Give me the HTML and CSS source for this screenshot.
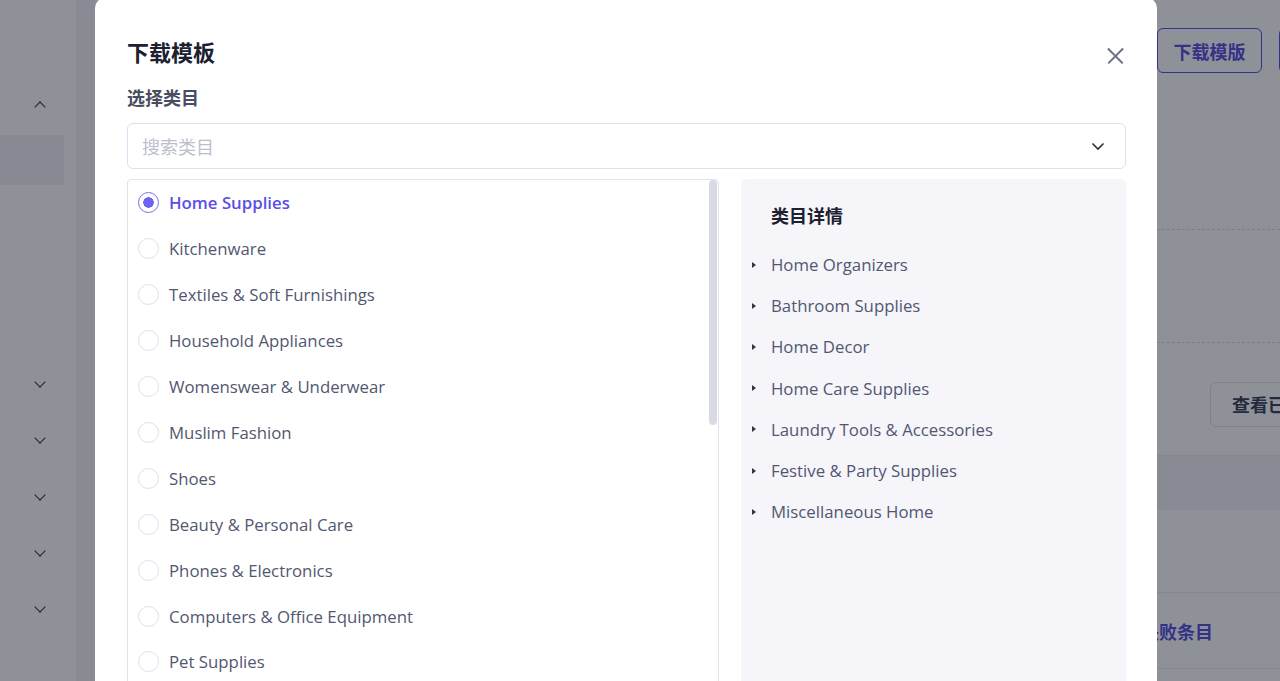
FILE: index.html
```html
<!DOCTYPE html>
<html lang="zh-CN">
<head>
  <meta charset="UTF-8" />
  <title>下载模板</title>
  <link rel="stylesheet" href="styles.css">
</head>
<body>
  <!-- strona pod spodem -->
  <div class="page">
    <aside class="sidebar">
      <div class="side-item"><span class="chev up"></span></div>
      <div class="side-active"></div>
      <div class="side-spacer"></div>
      <div class="side-item"><span class="chev"></span></div>
      <div class="side-item"><span class="chev"></span></div>
      <div class="side-item"><span class="chev"></span></div>
      <div class="side-item"><span class="chev"></span></div>
      <div class="side-item"><span class="chev"></span></div>
    </aside>
    <main class="main">
      <div class="header">
        <button class="btn-outline">下载模版</button>
        <button class="btn-fill"></button>
      </div>
      <div class="row row-a dashed"></div>
      <div class="row row-b dashed"></div>
      <div class="row row-c"><button class="btn-gray">查看已</button></div>
      <div class="row row-band"></div>
      <div class="row row-d"></div>
      <div class="row row-e"><span class="link">查看失败条目</span></div>
      <div class="row row-f"></div>
    </main>
  </div>
  <div class="mask"></div>

  <!-- okno modalne -->
  <div class="modal">
    <div class="modal-head">
      <h2>下载模板</h2>
      <span class="close"></span>
    </div>
    <div class="label">选择类目</div>
    <div class="select">
      <span class="placeholder">搜索类目</span>
      <svg width="14" height="9" viewBox="0 0 14 9"><path d="M1.5 1.5 L7 7 L12.5 1.5" fill="none" stroke="#2b2f3a" stroke-width="1.6"/></svg>
    </div>
    <div class="body">
      <div class="list">
        <div class="scroll"></div>
        <div id="cats"></div>
      </div>
      <div class="detail">
        <h3>类目详情</h3>
        <div id="subs"></div>
      </div>
    </div>
  </div>

  <script>
    const cats = ["Home Supplies", "Kitchenware", "Textiles & Soft Furnishings", "Household Appliances",
      "Womenswear & Underwear", "Muslim Fashion", "Shoes", "Beauty & Personal Care",
      "Phones & Electronics", "Computers & Office Equipment", "Pet Supplies"];
    const subs = ["Home Organizers", "Bathroom Supplies", "Home Decor", "Home Care Supplies",
      "Laundry Tools & Accessories", "Festive & Party Supplies", "Miscellaneous Home"];

    const catsEl = document.getElementById("cats");
    cats.forEach((c, i) => {
      const row = document.createElement("div");
      row.className = "cat" + (i === 0 ? " active" : "");
      row.innerHTML = `<span class="radio"></span><span>${c.replace("&", "&amp;")}</span>`;
      catsEl.appendChild(row);
    });

    const subsEl = document.getElementById("subs");
    subs.forEach(s => {
      const row = document.createElement("div");
      row.className = "sub";
      row.innerHTML = `<span class="tri"></span><span>${s.replace("&", "&amp;")}</span>`;
      subsEl.appendChild(row);
    });
  </script>
</body>
</html>
```

FILE: styles.css
```css
* { box-sizing: border-box; }
html, body { margin: 0; height: 100%; overflow: hidden; }
body {
  font-family: "Open Sans", "Noto Sans CJK SC", sans-serif;
  background: #fff;
  color: #4f5468;
}

/* strona w tle */
.page {
  display: flex;
  height: 100%;
}
.sidebar {
  width: 76px;
  flex: none;
  background: #fff;
  display: flex;
  flex-direction: column;
  padding-top: 80px;
}
.side-item {
  height: 56.3px;
  display: flex;
  align-items: center;
  justify-content: center;
  padding-left: 4px;
  flex: none;
}
.side-item:first-child { height: 48px; }
.side-active {
  height: 50px;
  width: 64px;
  margin-top: 7px;
  background: #ededf1;
  border-radius: 0 4px 4px 0;
  flex: none;
}
.side-spacer { height: 172px; flex: none; }
.chev {
  width: 8px;
  height: 8px;
  border-right: 1.5px solid #181c33;
  border-bottom: 1.5px solid #181c33;
  transform: rotate(45deg);
  margin-top: -6px;
}
.chev.up { transform: rotate(-135deg); margin-top: 6px; }

.main {
  flex: 1;
  background: #f3f3f5;
  padding-left: 19px;
  display: flex;
  flex-direction: column;
  overflow: hidden;
}
.header {
  height: 107px;
  background: #fff;
  display: flex;
  justify-content: flex-end;
  align-items: flex-start;
  gap: 17px;
  padding-top: 28px;
  margin-right: -99px;
}
.btn-outline, .btn-fill, .btn-gray {
  font-family: "Noto Sans CJK SC", sans-serif;
  font-weight: 700;
  font-size: 18px;
  height: 45px;
  border-radius: 6px;
  padding: 0 12px;
}
.btn-outline {
  width: 105px;
  background: #fff;
  color: #4b3fd8;
  border: 1.5px solid #4b3fd8;
}
.btn-fill {
  width: 100px;
  background: #4b3fd8;
  border: none;
}
.row { background: #fff; }
.row-a { height: 123px; }
.row-b { height: 113px; }
.dashed { border-bottom: 1px dashed #d6d7de; }
.row-c {
  height: 113px;
  border-bottom: 1px solid #e9e9ee;
  display: flex;
  justify-content: flex-end;
  align-items: center;
  padding-top: 10px;
  margin-right: -60px;
}
.btn-gray {
  width: 130px;
  background: #fff;
  color: #2a2e45;
  border: 1px solid #dcdde3;
  text-align: left;
  padding-left: 21px;
}
.row-band { height: 54px; background: #f3f3f5; }
.row-d { height: 83px; border-bottom: 1px solid #e9e9ee; }
.row-e {
  height: 76px;
  border-bottom: 1px solid #e9e9ee;
  display: flex;
  justify-content: flex-end;
  align-items: center;
  padding-right: 67px;
}
.link {
  font-family: "Noto Sans CJK SC", sans-serif;
  font-weight: 700;
  font-size: 18px;
  color: #4b3fd8;
}
.row-f { flex: 1; }

.mask {
  position: fixed;
  inset: 0;
  background: rgba(31, 35, 51, 0.5);
}

/* okno modalne */
.modal {
  position: fixed;
  left: 95px;
  top: -2px;
  width: 1062px;
  height: 720px;
  background: #fff;
  border-radius: 10px;
  padding: 36px 31px 0 32px;
}
.modal-head {
  display: flex;
  justify-content: space-between;
  align-items: center;
}
.modal-head h2 {
  margin: 0;
  font-family: "Noto Sans CJK SC", sans-serif;
  font-size: 22px;
  font-weight: 700;
  color: #1c2030;
  line-height: 34px;
}
.close {
  position: relative;
  width: 22px;
  height: 22px;
  margin-top: 10px;
}
.close::before, .close::after {
  content: "";
  position: absolute;
  left: 1px;
  top: 10px;
  width: 21px;
  height: 1.5px;
  background: #6b7086;
  transform: rotate(45deg);
}
.close::after { transform: rotate(-45deg); }
.label {
  margin-top: 16px;
  font-family: "Noto Sans CJK SC", sans-serif;
  font-size: 18px;
  font-weight: 700;
  color: #484d61;
  line-height: 26px;
}
.select {
  margin-top: 13px;
  height: 46px;
  border: 1px solid #dedff0;
  border-radius: 6px;
  display: flex;
  align-items: center;
  justify-content: space-between;
  padding: 0 20px 0 14px;
}
.placeholder {
  font-family: "Noto Sans CJK SC", sans-serif;
  font-size: 18px;
  color: #bbbfcc;
}
.body {
  display: flex;
  gap: 22px;
  margin-top: 10px;
}
.list {
  position: relative;
  width: 592px;
  height: 520px;
  border: 1px solid #dfe2f0;
  border-radius: 4px;
  padding: 0 10px;
  overflow: hidden;
}
.scroll {
  position: absolute;
  right: 1px;
  top: 0;
  width: 8px;
  height: 245px;
  background: #d9dbe4;
  border-radius: 4px;
}
.cat {
  height: 46.1px;
  display: flex;
  align-items: center;
  gap: 10px;
  font-size: 16.8px;
  color: #525770;
  margin-top: -0.2px;
}
.radio {
  width: 21px;
  height: 21px;
  border: 1px solid #dcdff0;
  border-radius: 50%;
  flex: none;
}
.cat.active { color: #5a4ee8; font-weight: 600; }
.cat.active .radio {
  border: 1.5px solid #7a6cf2;
  background: radial-gradient(circle, #6f61f2 0 5px, #fff 5.5px);
}
.detail {
  flex: 1;
  height: 520px;
  background: #f5f5fa;
  border-radius: 6px;
  padding: 22px 10px 0 30px;
}
.detail h3 {
  margin: 0 0 15px;
  font-family: "Noto Sans CJK SC", sans-serif;
  font-size: 18px;
  font-weight: 700;
  color: #1c2030;
  line-height: 28px;
}
.sub {
  height: 41.2px;
  display: flex;
  align-items: center;
  font-size: 16.8px;
  color: #525770;
  margin-left: -19px;
}
.tri {
  width: 0;
  height: 0;
  border-left: 4px solid #30344a;
  border-top: 3.5px solid transparent;
  border-bottom: 3.5px solid transparent;
  margin-right: 15px;
}
```
